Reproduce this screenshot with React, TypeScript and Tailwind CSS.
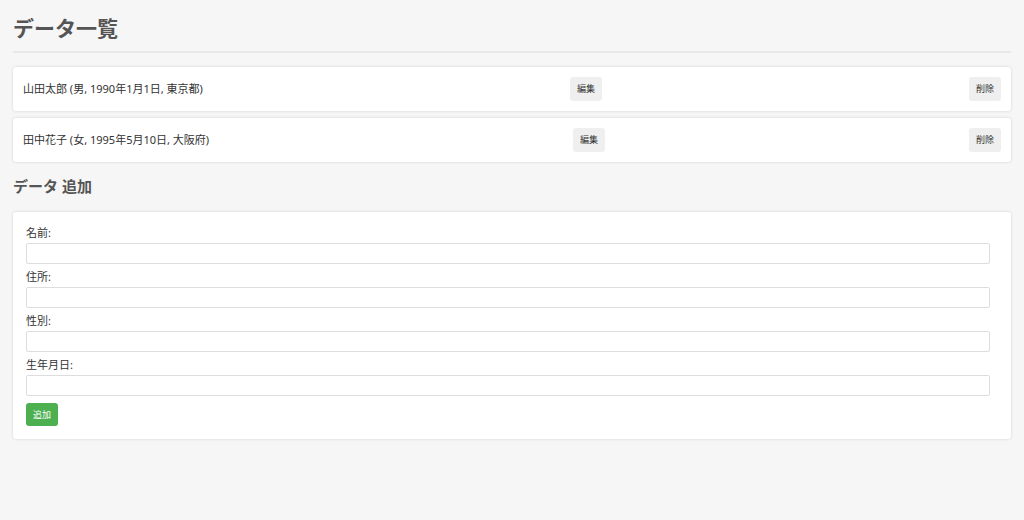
import { useState } from 'react'

type Person = { name: string; gender: string; birth: string; address: string }

const PEOPLE: Person[] = [
  { name: '山田太郎', gender: '男', birth: '1990年1月1日', address: '東京都' },
  { name: '田中花子', gender: '女', birth: '1995年5月10日', address: '大阪府' },
]

const FIELDS = ['名前', '住所', '性別', '生年月日']

export default function App() {
  const [people] = useState(PEOPLE)

  return (
    <div
      className="min-h-[520px] bg-[#f6f6f6] px-[13px] pt-[13px] text-[#333]"
      style={{ fontFamily: '"Noto Sans", "Noto Sans CJK JP", sans-serif' }}
    >
      <h1 className="text-[21px] font-bold leading-[30px] text-[#555]">データ一覧</h1>
      <div className="mt-[8px] mb-[14px] h-[2px] bg-[#e8e8e8]" />

      <div className="flex flex-col gap-[7px]">
        {people.map((p) => (
          <div
            key={p.name}
            className="flex items-center justify-between rounded-[3px] bg-white p-[10px] shadow-[0_0_3px_rgba(0,0,0,0.15)]"
          >
            <span className="text-[11px] leading-[24px]">
              {p.name} ({p.gender}, {p.birth}, {p.address})
            </span>
            <button className="h-[24px] rounded-[3px] bg-[#efefef] px-[7px] text-[9px] text-[#333]">編集</button>
            <button className="h-[24px] rounded-[3px] bg-[#efefef] px-[7px] text-[9px] text-[#333]">削除</button>
          </div>
        ))}
      </div>

      <h2 className="mt-[13px] text-[15px] font-bold leading-[22px] text-[#555]">データ 追加</h2>

      <div className="mt-[15px] rounded-[3px] bg-white px-[13px] pt-[10px] pb-[13px] shadow-[0_0_3px_rgba(0,0,0,0.15)]">
        {FIELDS.map((f) => (
          <div key={f} className="mb-[2px]">
            <label className="block text-[11px] leading-[21px]">{f}:</label>
            <input className="block h-[21px] w-[964px] rounded-[2px] border border-[#ddd] bg-white" />
          </div>
        ))}
        <button className="mt-[5px] h-[23px] rounded-[3px] bg-[#4caf50] px-[7px] text-[9px] text-white">追加</button>
      </div>
    </div>
  )
}
